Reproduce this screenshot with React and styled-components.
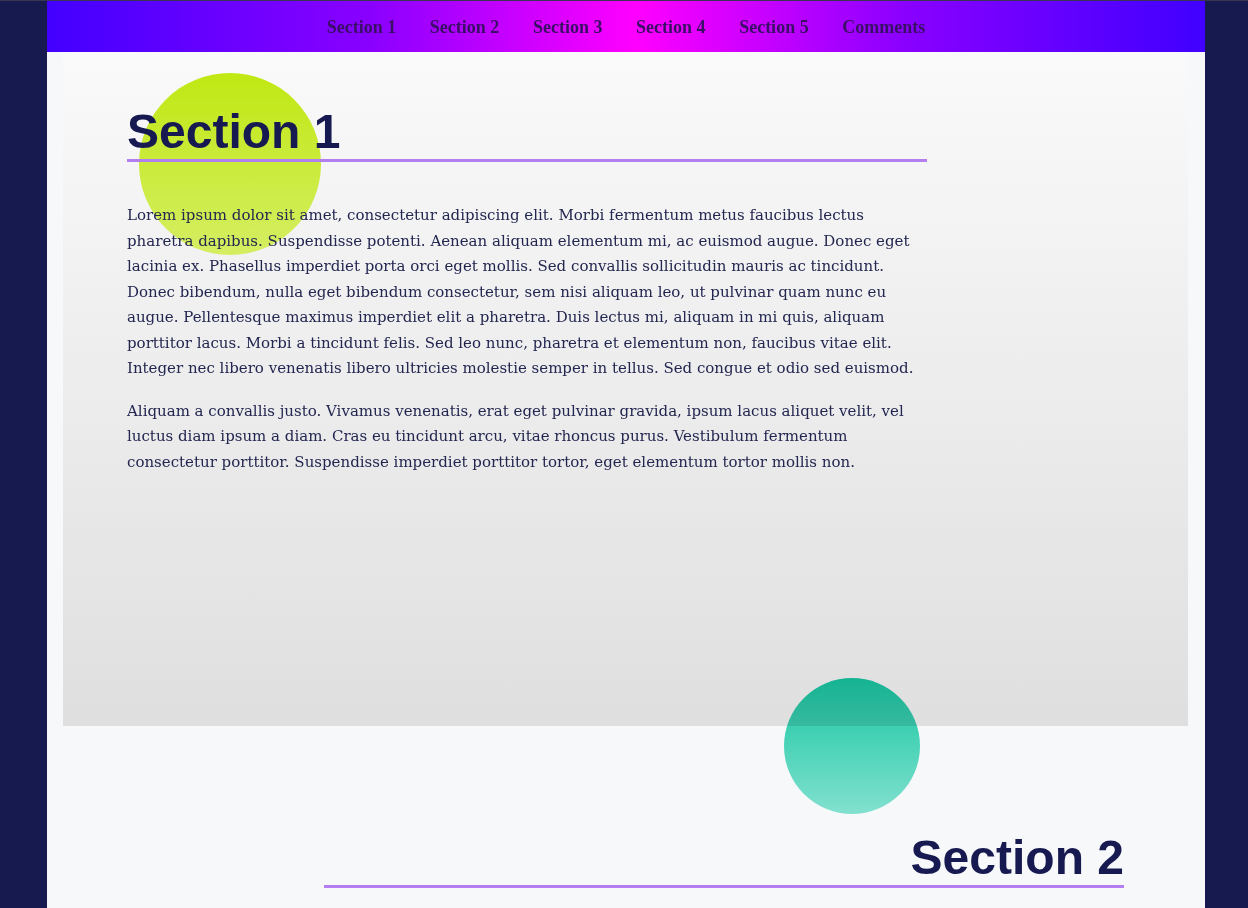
import React from "react";
import styled, { createGlobalStyle } from "styled-components";

const GlobalStyle = createGlobalStyle`
  html, body {
    margin: 0;
    padding: 0;
    background-color: #171a4f;
  }
  body {
    border-top: 1px solid #3a3552;
    font-family: "DejaVu Serif", serif;
    color: #23264f;
  }
`;

const Page = styled.div`
  width: 1158px;
  margin-left: 47px;
  min-height: 907px;
  background-color: #f7f8fa;
  position: relative;
  overflow: hidden;
`;

const Nav = styled.nav`
  height: 51px;
  display: flex;
  justify-content: center;
  align-items: center;
  gap: 33.6px;
  padding-top: 2px;
  box-sizing: border-box;
  background: linear-gradient(
    to right,
    #4200ff 0%,
    #8a00ff 28%,
    #ff00ff 51%,
    #8a00ff 74%,
    #4000ff 100%
  );
`;

const NavLink = styled.a`
  font-family: "Liberation Serif", serif;
  font-size: 18px;
  font-weight: 700;
  color: #3a0f66;
  text-decoration: none;
`;

const Section = styled.section`
  position: relative;
  margin: ${props => (props.$right ? "52px" : "0")} 17px 0 16px;
  padding: 52px 64px 64px;
  min-height: ${props => props.$minHeight || "auto"};
  box-sizing: border-box;
  background: ${props =>
    props.$shaded ? "linear-gradient(#fafafb, #dfdfe0)" : "transparent"};
  text-align: ${props => (props.$right ? "right" : "left")};
`;

const Content = styled.div`
  position: relative;
  z-index: 1;
`;

const Heading = styled.h2`
  width: 800px;
  margin: 0 0 ${props => (props.$right ? "0" : "41px")}
    ${props => (props.$right ? "auto" : "0")};
  padding: 0;
  font-family: "Liberation Sans", Arial, sans-serif;
  font-size: 48px;
  font-weight: 700;
  line-height: 55px;
  color: #161a50;
  border-bottom: 3px solid #b37ff0;
`;

const Text = styled.p`
  width: 800px;
  margin: 0 0 17px;
  font-size: 15px;
  line-height: 25.5px;
  color: #23264f;
`;

const Blob = styled.div`
  position: absolute;
  border-radius: 50%;
  width: ${props => props.$size}px;
  height: ${props => props.$size}px;
  background: ${props => props.$bg};
  mix-blend-mode: multiply;
  z-index: 0;
`;

const LimeBlob = styled(Blob)`
  left: 76px;
  top: 21px;
`;

const TealBlob = styled(Blob)`
  left: 737px;
  top: 677px;
  z-index: 2;
`;

const links = ["Section 1", "Section 2", "Section 3", "Section 4", "Section 5", "Comments"];

export default function App() {
  return (
    <>
      <GlobalStyle />
      <Page>
        <Nav>
          {links.map(link => (
            <NavLink key={link} href="#">
              {link}
            </NavLink>
          ))}
        </Nav>
        <Section $shaded $minHeight="674px">
          <LimeBlob $size={182} $bg="linear-gradient(#c5ee12, #e1fb67)" />
          <Content>
            <Heading>Section 1</Heading>
            <Text>
              Lorem ipsum dolor sit amet, consectetur adipiscing elit. Morbi fermentum metus faucibus
              lectus pharetra dapibus. Suspendisse potenti. Aenean aliquam elementum mi, ac euismod
              augue. Donec eget lacinia ex. Phasellus imperdiet porta orci eget mollis. Sed convallis
              sollicitudin mauris ac tincidunt. Donec bibendum, nulla eget bibendum consectetur, sem
              nisi aliquam leo, ut pulvinar quam nunc eu augue. Pellentesque maximus imperdiet elit a
              pharetra. Duis lectus mi, aliquam in mi quis, aliquam porttitor lacus. Morbi a tincidunt
              felis. Sed leo nunc, pharetra et elementum non, faucibus vitae elit. Integer nec libero
              venenatis libero ultricies molestie semper in tellus. Sed congue et odio sed euismod.
            </Text>
            <Text>
              Aliquam a convallis justo. Vivamus venenatis, erat eget pulvinar gravida, ipsum lacus
              aliquet velit, vel luctus diam ipsum a diam. Cras eu tincidunt arcu, vitae rhoncus purus.
              Vestibulum fermentum consectetur porttitor. Suspendisse imperdiet porttitor tortor, eget
              elementum tortor mollis non.
            </Text>
          </Content>
        </Section>
        <TealBlob $size={136} $bg="linear-gradient(#17cba5, #86e8d3)" />
        <Section $right>
          <Content>
            <Heading $right>Section 2</Heading>
          </Content>
        </Section>
      </Page>
    </>
  );
}
